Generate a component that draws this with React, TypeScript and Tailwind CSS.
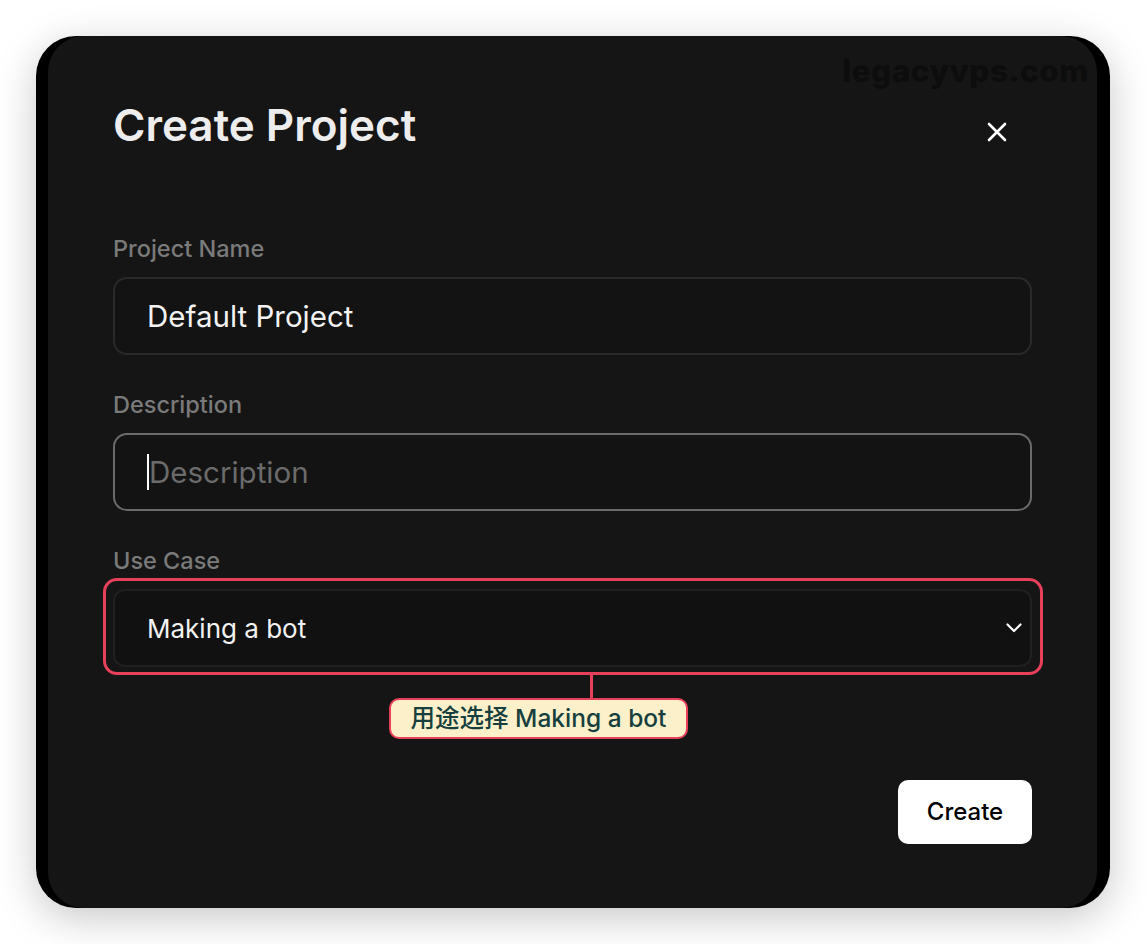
const font = { fontFamily: 'Inter, "Noto Sans CJK SC", sans-serif' }

function Label({ children }: { children: React.ReactNode }) {
  return <div className="text-[23.5px] leading-[28px] font-medium text-[#7a7a7a] mb-[14px]">{children}</div>
}

export default function App() {
  return (
    <div className="min-h-screen bg-white pt-[36px] pl-[36px]" style={font}>
      <div className="w-[1074px] h-[872px] bg-black rounded-[40px] shadow-[0_10px_40px_rgba(0,0,0,0.22)]">
        <div className="relative ml-[12px] mr-[13px] h-full bg-[#151515] rounded-[36px] px-[65px] pt-[65px]">
          <div className="absolute top-[11px] right-[8px] text-[31.5px] font-extrabold text-[#0d0d0d] tracking-[0.5px] select-none">
            legacyvps.com
          </div>

          <div className="flex items-start justify-between h-[48px]">
            <h1 className="text-[44px] leading-[48px] font-semibold text-[#ededed]">Create Project</h1>
            <button className="mt-[21px] mr-[25px] text-white">
              <svg width="20" height="20" viewBox="0 0 20 20" fill="none" stroke="currentColor" strokeWidth="2.6" strokeLinecap="round">
                <path d="M2 2l16 16M18 2L2 18" />
              </svg>
            </button>
          </div>

          <div className="mt-[86px] flex flex-col gap-[36px]">
            <div>
              <Label>Project Name</Label>
              <div className="h-[78px] rounded-[14px] border-2 border-[#2a2a2a] bg-[#131313] flex items-center px-[32px]">
                <span className="text-[29.5px] text-[#f2f2f2]">Default Project</span>
              </div>
            </div>

            <div>
              <Label>Description</Label>
              <div className="h-[78px] rounded-[14px] border-2 border-[#6a6a6a] bg-[#131313] flex items-center px-[32px]">
                <span className="w-[2px] h-[36px] bg-white" />
                <span className="text-[29.5px] text-[#6b6b6b]">Description</span>
              </div>
            </div>

            <div>
              <Label>Use Case</Label>
              <div className="relative">
                <div className="h-[78px] rounded-[12px] border-2 border-[#202020] bg-[#111111] flex items-center justify-between pl-[32px] pr-[8px]">
                  <span className="text-[26px] text-[#f2f2f2]">Making a bot</span>
                  <svg width="16" height="10" viewBox="0 0 16 10" fill="none" stroke="white" strokeWidth="2.2" strokeLinecap="round" strokeLinejoin="round">
                    <path d="M1.5 1.5L8 8l6.5-6.5" />
                  </svg>
                </div>
                {/* highlight ring */}
                <div className="absolute -top-[11px] -bottom-[8px] -left-[10px] -right-[11px] rounded-[14px] border-[3.5px] border-[#e6405a] pointer-events-none" />
              </div>
            </div>
          </div>

          <div className="relative ml-[276px] mt-[31px] w-[299px] h-[41px] rounded-[10px] border-2 border-[#e6405a] bg-[#fbf0c9] flex items-center justify-center">
            <span className="absolute -top-[25px] left-[199px] w-[3px] h-[23px] bg-[#e6405a]" />
            <span className="text-[24.5px] font-medium text-[#173f3f]">用途选择 Making a bot</span>
          </div>

          <div className="flex justify-end mt-[41px]">
            <button className="w-[134px] h-[64px] rounded-[10px] bg-white text-[24px] font-medium text-black">Create</button>
          </div>
        </div>
      </div>
    </div>
  )
}
